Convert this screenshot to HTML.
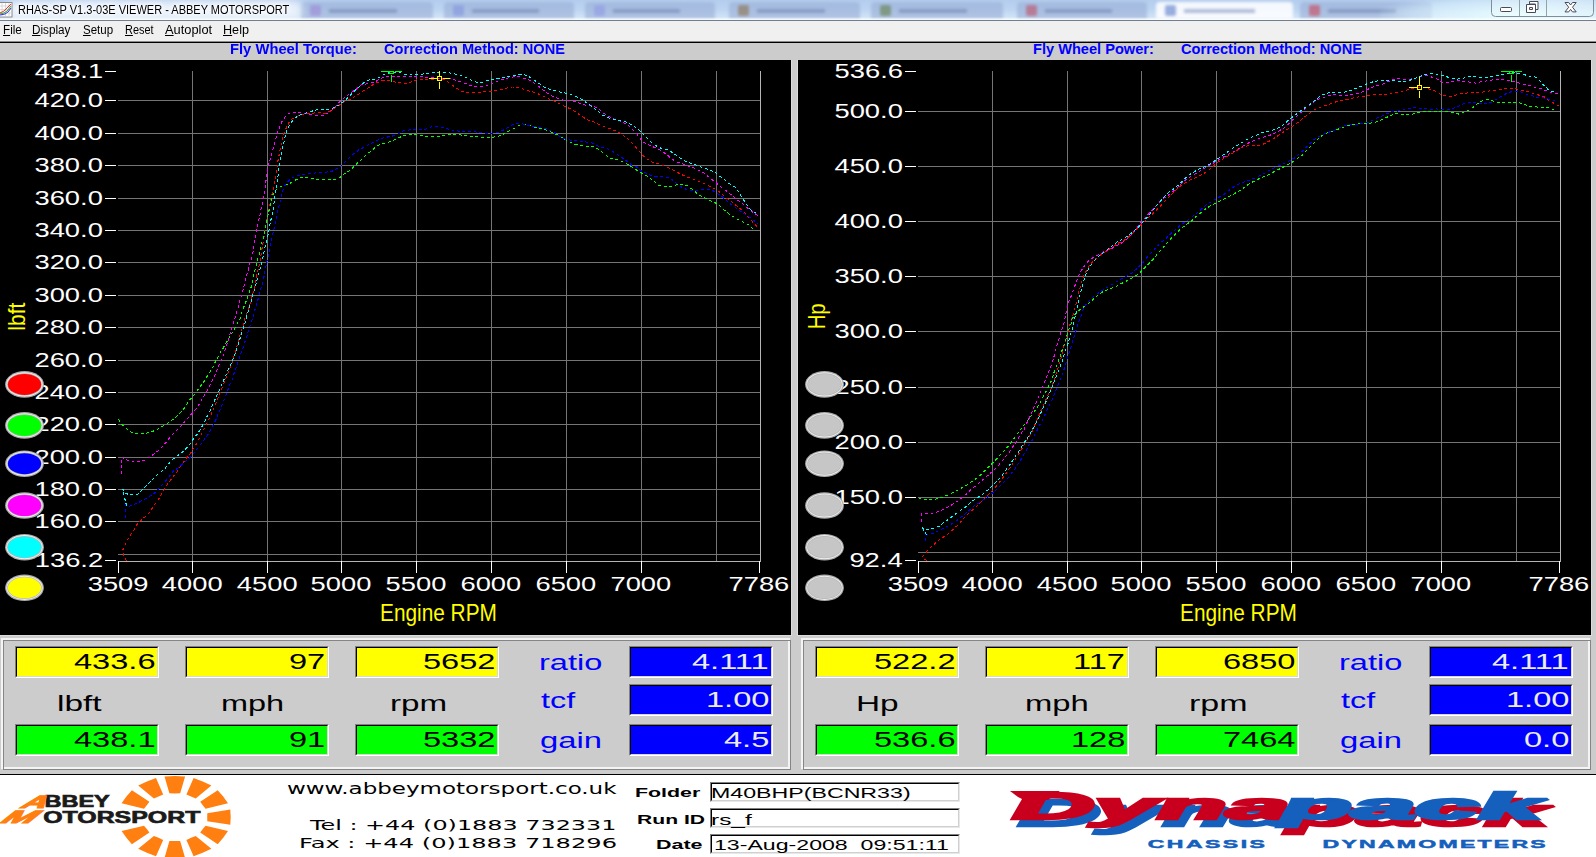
<!DOCTYPE html>
<html lang="en"><head><meta charset="utf-8"><title>RHAS-SP V1.3-03E VIEWER - ABBEY MOTORSPORT</title>
<style>

html,body{margin:0;padding:0;background:#ccc;}
body{width:1596px;height:857px;overflow:hidden;position:relative;font-family:'Liberation Sans',sans-serif;}
.abs,.t{position:absolute;}
.t{white-space:pre;line-height:1;transform-origin:0 0;}
#titlebar{left:0;top:0;width:1596px;height:21px;overflow:hidden;background:linear-gradient(#b4cdee 0,#bdd5f2 45%,#cfe1f6 80%,#e6f0fb 100%);}
#menubar{left:0;top:21px;width:1596px;height:20px;background:#f0f0f0;}
#menubar u{text-decoration:underline;text-underline-offset:1px;}
#sep{left:0;top:41px;width:1596px;height:2px;background:#000;border-top:1px solid #8a8a8a;box-sizing:border-box;}
#hdr{left:0;top:43px;width:1596px;height:17px;background:#ccc;}
.chart{top:60px;height:575px;background:#000;overflow:hidden;border-bottom:1px solid #dcdcdc;}
#chartL{left:0;width:791px;border-right:1px solid #dcdcdc;}
#chartR{left:797px;width:793px;border-left:1px solid #dcdcdc;border-right:1px solid #dcdcdc;}
.panel{top:635px;height:139px;background:#ccc;}
#panelL{left:0;width:791px;}
#panelR{left:800px;width:791px;}
.frame{position:absolute;box-sizing:border-box;}
.fw{left:1px;top:3px;width:789px;height:131px;border:2px solid #f4f4f4;}
.fd{left:3px;top:5px;width:788px;height:130px;border:1px solid #858585;}
.box{position:absolute;box-sizing:border-box;width:144px;height:32px;border:1px solid;border-color:#808080 #fff #fff #808080;overflow:hidden;}
.box>i{position:absolute;left:0;top:0;right:0;bottom:0;border:1px solid;border-color:#000 #d8d8d8 #d8d8d8 #000;}
.y{background:#ff0;}.g{background:#0f0;}.b{background:#00f;}
#footline{left:0;top:774px;width:1596px;height:1px;background:#000;}
#footer{left:0;top:775px;width:1596px;height:82px;background:#fff;overflow:hidden;}
.fld{position:absolute;box-sizing:border-box;left:710px;width:250px;height:20px;background:#fff;border:1px solid;border-color:#808080 #e8e8e8 #e8e8e8 #808080;}
.fld>i{position:absolute;left:0;top:0;right:0;bottom:0;border:1px solid;border-color:#000 #d0d0d0 #d0d0d0 #000;}
svg{position:absolute;left:0;top:0;overflow:visible;}

</style></head><body>
<div id="titlebar" class="abs">
<div id="glass" class="abs" style="left:0;top:0;width:1596px;height:21px;filter:blur(1.6px)"><div class="abs" style="left:301px;top:2px;width:132px;height:17px;background:rgba(150,172,212,.55);border-radius:4px 4px 0 0"></div><div class="abs" style="left:310px;top:5px;width:11px;height:11px;background:#9d83d6;opacity:.55;border-radius:2px"></div><div class="abs" style="left:329px;top:9px;width:68px;height:4px;background:rgba(95,115,165,.45)"></div><div class="abs" style="left:444px;top:2px;width:130px;height:17px;background:rgba(150,172,212,.55);border-radius:4px 4px 0 0"></div><div class="abs" style="left:453px;top:5px;width:11px;height:11px;background:#7f8fe0;opacity:.55;border-radius:2px"></div><div class="abs" style="left:472px;top:9px;width:67px;height:4px;background:rgba(95,115,165,.45)"></div><div class="abs" style="left:585px;top:2px;width:130px;height:17px;background:rgba(150,172,212,.55);border-radius:4px 4px 0 0"></div><div class="abs" style="left:594px;top:5px;width:11px;height:11px;background:#8c95e6;opacity:.55;border-radius:2px"></div><div class="abs" style="left:613px;top:9px;width:67px;height:4px;background:rgba(95,115,165,.45)"></div><div class="abs" style="left:729px;top:2px;width:131px;height:17px;background:rgba(150,172,212,.55);border-radius:4px 4px 0 0"></div><div class="abs" style="left:738px;top:5px;width:11px;height:11px;background:#8a6a3c;opacity:.55;border-radius:2px"></div><div class="abs" style="left:757px;top:9px;width:68px;height:4px;background:rgba(95,115,165,.45)"></div><div class="abs" style="left:871px;top:2px;width:132px;height:17px;background:rgba(150,172,212,.55);border-radius:4px 4px 0 0"></div><div class="abs" style="left:880px;top:5px;width:11px;height:11px;background:#5d7a3a;opacity:.55;border-radius:2px"></div><div class="abs" style="left:899px;top:9px;width:68px;height:4px;background:rgba(95,115,165,.45)"></div><div class="abs" style="left:1017px;top:2px;width:130px;height:17px;background:rgba(150,172,212,.55);border-radius:4px 4px 0 0"></div><div class="abs" style="left:1026px;top:5px;width:11px;height:11px;background:#c0455a;opacity:.55;border-radius:2px"></div><div class="abs" style="left:1045px;top:9px;width:67px;height:4px;background:rgba(95,115,165,.45)"></div><div class="abs" style="left:1156px;top:2px;width:137px;height:17px;background:rgba(255,255,255,.85);border-radius:4px 4px 0 0"></div><div class="abs" style="left:1165px;top:5px;width:11px;height:11px;background:#4a6fc4;opacity:.55;border-radius:2px"></div><div class="abs" style="left:1184px;top:9px;width:71px;height:4px;background:rgba(120,140,190,.55)"></div><div class="abs" style="left:1300px;top:2px;width:132px;height:17px;background:rgba(150,172,212,.55);border-radius:4px 4px 0 0"></div><div class="abs" style="left:1309px;top:5px;width:11px;height:11px;background:#d23b4b;opacity:.55;border-radius:2px"></div><div class="abs" style="left:1328px;top:9px;width:68px;height:4px;background:rgba(95,115,165,.45)"></div><div class="abs" style="left:6px;top:1px;width:296px;height:17px;border-radius:8px;background:rgba(255,255,255,.72);filter:blur(4px)"></div><div class="abs" style="left:1380px;top:-6px;width:240px;height:30px;background:radial-gradient(ellipse at 60% 70%,rgba(235,255,255,.95),rgba(220,245,255,.5) 55%,rgba(255,255,255,0) 75%)"></div></div><div class="abs" style="left:0;top:17px;width:1596px;height:3px;background:linear-gradient(rgba(255,255,255,0),rgba(255,255,255,.9))"></div><div class="abs" style="left:0;top:20px;width:1596px;height:1px;background:#6f7f8f"></div><svg width="14" height="20" viewBox="0 0 14 20"><rect x="-2" y="2.5" width="14" height="14.5" fill="#fff" stroke="#8a8a8a" stroke-width="1"/><path d="M2 3v14M5.5 3v14M9 3v14M-2 6h14M-2 9.5h14M-2 13h14" stroke="#cfcfcf" stroke-width=".8" fill="none"/><path d="M0 13 4 11 7 8 11 4" stroke="#e33" fill="none" stroke-width="1"/><path d="M0 14 4 13 7 11 11 6" stroke="#3a3" fill="none" stroke-width="1"/><path d="M0 15 5 14 8 12 11 8" stroke="#33e" fill="none" stroke-width="1"/></svg><span class="t" style="left:17.70px;top:2.60px;font:12px 'Liberation Sans',sans-serif;color:#000;transform:scaleX(0.9171);text-shadow:0 0 4px #fff,0 0 6px #fff,0 0 8px #fff;">RHAS-SP V1.3-03E VIEWER - ABBEY MOTORSPORT</span><svg id="winctl" style="left:1488px" width="108" height="20" viewBox="1488 0 108 20"><path d="M1491.5 -1V12.5Q1491.5 16.5 1495.5 16.5H1589.5Q1593.5 16.5 1593.5 12.5V-1" fill="rgba(255,255,255,.18)" stroke="#7f8f99" stroke-width="1"/><path d="M1519.5 0V16M1546.5 0V16" stroke="#8fa3a8" stroke-width="1"/><rect x="1500.5" y="7.5" width="11" height="4" rx="1" fill="#fff" stroke="#4a4a55" stroke-width="1"/><path d="M1529.5 1.5h8.5v8h-2.5v-5.500h-6z" fill="#fff" stroke="#4a4a55" stroke-width="1" stroke-linejoin="round"/><path fill-rule="evenodd" d="M1526.500 4.500h9v8h-9zM1529.500 7.500h3v2h-3z" fill="#fff" stroke="#4a4a55" stroke-width="1" stroke-linejoin="round"/><path d="M1565 2.500h3.700l1.900 2.500 1.900-2.500h3.700l-3.700 4.700 3.700 4.700h-3.700l-1.900-2.500-1.900 2.500h-3.700l3.700-4.700z" fill="#fff" stroke="#4a4a55" stroke-width="1" stroke-linejoin="round"/></svg>
</div>
<div id="menubar" class="abs">
<span class="t" style="left:2.54px;top:1.60px;font:12px 'Liberation Sans',sans-serif;color:#000;transform:scaleX(0.9708);"><u>F</u>ile</span>
<span class="t" style="left:32.34px;top:1.60px;font:12px 'Liberation Sans',sans-serif;color:#000;transform:scaleX(0.9755);"><u>D</u>isplay</span>
<span class="t" style="left:82.77px;top:1.60px;font:12px 'Liberation Sans',sans-serif;color:#000;transform:scaleX(0.9604);"><u>S</u>etup</span>
<span class="t" style="left:124.61px;top:1.60px;font:12px 'Liberation Sans',sans-serif;color:#000;transform:scaleX(0.9083);"><u>R</u>eset</span>
<span class="t" style="left:164.97px;top:1.60px;font:12px 'Liberation Sans',sans-serif;color:#000;transform:scaleX(1.0698);"><u>A</u>utoplot</span>
<span class="t" style="left:223.16px;top:1.60px;font:12px 'Liberation Sans',sans-serif;color:#000;transform:scaleX(1.0519);"><u>H</u>elp</span>
</div>
<div id="sep" class="abs"></div>
<div id="hdr" class="abs">
<span class="t" style="left:230.01px;top:-2.30px;font:normal bold 14.2px 'Liberation Sans',sans-serif;color:#00f;transform:scaleX(1.0409);">Fly Wheel Torque:</span>
<span class="t" style="left:384.20px;top:-2.30px;font:normal bold 14.2px 'Liberation Sans',sans-serif;color:#00f;transform:scaleX(1.0298);">Correction Method: NONE</span>
<span class="t" style="left:1033.02px;top:-2.30px;font:normal bold 14.2px 'Liberation Sans',sans-serif;color:#00f;transform:scaleX(1.0291);">Fly Wheel Power:</span>
<span class="t" style="left:1181.40px;top:-2.30px;font:normal bold 14.2px 'Liberation Sans',sans-serif;color:#00f;transform:scaleX(1.0298);">Correction Method: NONE</span>
</div>
<div id="chartL" class="abs chart"><svg width="791" height="575" viewBox="0 60 791 575" font-family="'Liberation Sans',sans-serif">
<path d="M118 100.5H761M118 133.5H761M118 165.5H761M118 198.5H761M118 230.5H761M118 262.5H761M118 295.5H761M118 327.5H761M118 360.5H761M118 392.5H761M118 424.5H761M118 457.5H761M118 489.5H761M118 521.5H761M118 554.5H761M192.5 71V561M267.5 71V561M341.5 71V561M416.5 71V561M491.5 71V561M566.5 71V561M641.5 71V561M716.5 71V561" stroke="#757575" stroke-width="1" fill="none" shape-rendering="crispEdges"/>
<path d="M118 561.5H761M760.5 71V561" stroke="#b4b4b4" stroke-width="1" fill="none" shape-rendering="crispEdges"/>
<path d="M105 71.5H116M105 100.5H116M105 133.5H116M105 165.5H116M105 198.5H116M105 230.5H116M105 262.5H116M105 295.5H116M105 327.5H116M105 360.5H116M105 392.5H116M105 424.5H116M105 457.5H116M105 489.5H116M105 521.5H116M105 560.5H116M118.5 561V573M192.5 561V573M267.5 561V573M341.5 561V573M416.5 561V573M491.5 561V573M566.5 561V573M641.5 561V573M759.5 561V573" stroke="#fff" stroke-width="1" fill="none" shape-rendering="crispEdges"/>
<g>
<text transform="translate(34.73,77.90) scale(1.4166,1)" font-size="19.3" fill="#fff">438.1</text>
<text transform="translate(34.46,106.90) scale(1.4166,1)" font-size="19.3" fill="#fff">420.0</text>
<text transform="translate(34.46,139.90) scale(1.4166,1)" font-size="19.3" fill="#fff">400.0</text>
<text transform="translate(34.46,171.90) scale(1.4166,1)" font-size="19.3" fill="#fff">380.0</text>
<text transform="translate(34.46,204.90) scale(1.4166,1)" font-size="19.3" fill="#fff">360.0</text>
<text transform="translate(34.46,236.90) scale(1.4166,1)" font-size="19.3" fill="#fff">340.0</text>
<text transform="translate(34.46,268.90) scale(1.4166,1)" font-size="19.3" fill="#fff">320.0</text>
<text transform="translate(34.46,301.90) scale(1.4166,1)" font-size="19.3" fill="#fff">300.0</text>
<text transform="translate(34.46,333.90) scale(1.4166,1)" font-size="19.3" fill="#fff">280.0</text>
<text transform="translate(34.46,366.90) scale(1.4166,1)" font-size="19.3" fill="#fff">260.0</text>
<text transform="translate(34.46,398.90) scale(1.4166,1)" font-size="19.3" fill="#fff">240.0</text>
<text transform="translate(34.46,430.90) scale(1.4166,1)" font-size="19.3" fill="#fff">220.0</text>
<text transform="translate(34.46,463.90) scale(1.4166,1)" font-size="19.3" fill="#fff">200.0</text>
<text transform="translate(34.46,495.90) scale(1.4166,1)" font-size="19.3" fill="#fff">180.0</text>
<text transform="translate(34.46,527.90) scale(1.4166,1)" font-size="19.3" fill="#fff">160.0</text>
<text transform="translate(34.76,566.90) scale(1.4166,1)" font-size="19.3" fill="#fff">136.2</text>
<text transform="translate(87.72,590.80) scale(1.4166,1)" font-size="19.3" fill="#fff">3509</text>
<text transform="translate(161.82,590.80) scale(1.4166,1)" font-size="19.3" fill="#fff">4000</text>
<text transform="translate(236.82,590.80) scale(1.4166,1)" font-size="19.3" fill="#fff">4500</text>
<text transform="translate(310.58,590.80) scale(1.4166,1)" font-size="19.3" fill="#fff">5000</text>
<text transform="translate(385.58,590.80) scale(1.4166,1)" font-size="19.3" fill="#fff">5500</text>
<text transform="translate(460.43,590.80) scale(1.4166,1)" font-size="19.3" fill="#fff">6000</text>
<text transform="translate(535.43,590.80) scale(1.4166,1)" font-size="19.3" fill="#fff">6500</text>
<text transform="translate(610.43,590.80) scale(1.4166,1)" font-size="19.3" fill="#fff">7000</text>
<text transform="translate(728.50,590.80) scale(1.4166,1)" font-size="19.3" fill="#fff">7786</text>
</g>
<text transform="translate(380.09,621.00) scale(0.8563,1)" font-size="24.3" fill="#ff0">Engine RPM</text>
<text transform="translate(25.00,330.71) rotate(-90) scale(0.8912,1)" font-size="23.6" fill="#ff0">lbft</text>
<g fill="none" stroke-width="1" stroke-dasharray="3 2.6" shape-rendering="crispEdges">
<path d="M126.6,560.7 123.6,555.7 122.5,550.7 124.6,546.2 126.6,541.7 128.6,538.2 131.6,533.1 134.1,529.6 136.6,525.1 139.6,521.6 142.6,518.9 146.6,515.6 149.1,512.9 151.2,509.6 153.7,505.8 156.7,502.1 159.2,498.3 161.2,494.3 163.7,490.2 165.7,486.7 168.2,483.2 171.2,479.2 174.7,474.7 178.3,470.2 181.3,465.2 184.3,461.1 187.3,457.1 190.3,453.6 192.8,449.6 195.3,445.6 198.3,441.1 199.8,437.0 201.8,433.5 203.9,429.3 206.4,424.3 207.9,421.3 210.4,416.2 212.4,411.2 214.9,405.7 216.9,400.2 218.9,396.0 220.9,391.2 222.9,386.1 224.9,381.1 226.9,375.6 228.9,371.1 230.5,366.6 232.5,362.0 234.0,356.5 235.4,351.3 236.9,346.8 237.9,342.8 239.4,338.3 240.4,333.2 242.4,328.2 243.9,322.2 245.4,317.0 247.4,312.2 248.4,308.1 250.5,302.6 251.7,297.6 253.0,292.6 254.5,287.6 255.5,282.0 256.3,276.5 257.9,270.3 259.4,264.3 260.4,258.3 261.4,252.2 262.4,246.2 263.4,240.2 264.4,234.2 265.4,228.1 266.4,223.1 267.2,218.1 268.4,213.1 269.4,207.1 271.7,195.5 273.4,188.8 275.4,178.8 276.7,168.8 278.0,160.5 279.7,152.1 280.9,145.4 282.5,138.8 284.2,132.1 286.7,127.1 289.2,122.1 292.5,118.7 297.5,116.2 302.6,114.6 308.4,113.7 315.1,112.9 318.4,112.4 323.4,113.4 326.8,112.9 331.8,110.4 336.8,106.7 341.8,103.4 346.8,100.7 351.8,98.4 356.8,95.4 361.8,92.0 366.8,88.7 371.8,85.4 376.8,82.9 381.8,80.9 388.5,80.4 395.2,82.0 401.8,83.2 407.7,83.2 412.7,81.2 416.9,79.5 425.2,79.2 431.9,79.2 439.4,78.7 445.2,80.0 450.2,83.7 456.1,87.9 461.9,91.7 468.6,92.5 476.9,92.5 483.6,91.7 492.0,91.2 498.6,90.4 505.0,88.4 512.5,87.0 516.7,87.0 523.4,89.0 530.0,91.2 536.7,93.2 543.4,96.2 550.1,99.5 556.7,102.1 562.6,105.4 566.8,107.1 571.8,109.6 576.8,112.9 581.8,116.2 586.8,119.6 593.5,121.7 600.1,125.1 606.8,127.4 613.5,130.1 619.3,132.4 623.5,135.4 628.5,139.6 633.5,144.6 638.5,150.4 641.8,154.6 646.9,158.8 651.9,162.1 658.5,163.8 665.2,166.3 671.9,169.6 678.6,173.0 685.2,176.3 691.9,178.5 698.6,181.3 704.3,183.6 708.8,185.9 713.3,188.1 715.8,189.6 719.3,191.9 722.8,194.9 725.8,197.6 729.9,200.1 732.9,202.9 736.4,205.6 739.9,208.6 743.9,211.7 746.4,214.7 748.9,218.0 751.9,221.0 755.0,224.7 758.5,228.0" stroke="#f00"/>
<path d="M118.5,419.3 119.5,421.3 121.8,424.3 125.1,427.3 128.1,430.3 132.1,432.8 137.1,433.8 143.1,433.8 148.1,432.8 153.2,431.1 157.2,429.3 161.7,426.8 165.7,424.8 169.2,422.1 173.2,419.3 177.3,415.7 180.8,412.0 184.3,408.0 187.3,403.7 190.3,399.2 193.3,396.2 195.8,393.0 198.3,389.1 201.3,385.1 203.9,381.6 206.9,376.6 208.4,374.6 210.9,370.6 213.4,366.1 215.9,360.5 218.4,356.5 220.3,352.3 222.8,348.8 224.9,344.8 227.4,340.8 229.9,336.2 232.9,332.0 234.9,328.0 237.4,323.2 239.9,319.2 241.4,314.2 243.4,308.1 245.4,303.1 246.9,299.1 248.9,293.6 251.0,287.6 252.5,281.5 253.5,276.0 254.9,270.3 256.4,264.8 257.6,259.8 258.9,255.2 260.4,249.7 261.4,244.2 262.9,239.2 264.2,233.7 265.6,227.1 266.9,220.1 268.4,213.6 269.4,208.6 271.0,203.6 271.7,197.2 274.2,192.2 276.7,189.2 280.9,186.3 285.0,185.5 289.2,183.8 294.2,180.8 299.2,178.0 304.2,177.1 310.1,178.3 316.7,179.5 326.8,179.5 335.1,179.3 339.3,178.0 343.4,174.6 348.4,171.3 353.5,167.1 357.6,163.0 362.6,158.5 367.6,153.8 372.6,149.6 376.8,146.3 381.8,143.8 386.8,142.4 391.8,141.3 396.0,138.8 400.2,137.1 405.2,135.4 411.9,134.6 418.5,135.1 426.9,136.3 435.2,136.4 441.9,135.9 446.9,134.6 453.6,134.3 460.3,134.9 468.6,136.3 476.9,136.6 485.3,137.4 493.6,137.1 502.0,135.4 505.0,132.9 510.0,130.4 515.0,127.9 520.0,125.1 525.0,124.6 530.0,125.7 535.9,127.4 541.7,128.8 548.4,130.8 553.4,132.9 558.4,135.4 564.2,138.8 570.1,142.1 575.1,144.6 581.8,145.4 588.4,146.3 595.1,147.1 600.1,150.4 605.1,154.6 610.1,158.0 616.8,159.6 623.5,162.1 628.5,164.6 633.5,168.0 638.5,171.3 643.5,174.1 648.5,177.1 653.5,180.8 658.5,185.2 665.2,186.8 671.9,186.3 676.9,184.7 683.6,184.2 688.6,186.3 693.6,190.5 698.6,194.7 703.3,197.3 707.3,199.4 711.8,201.3 715.3,202.9 719.3,205.6 722.8,208.9 726.8,212.0 730.4,215.0 734.4,217.4 738.4,219.7 742.4,221.7 745.4,223.0 748.9,225.0 751.9,228.0 756.0,231.0" stroke="#0f0"/>
<path d="M125.6,517.6 125.6,511.1 125.6,504.5 129.1,506.5 133.6,504.8 138.1,502.8 143.1,499.8 147.1,498.1 151.2,495.3 154.2,493.3 158.2,489.2 161.2,485.7 164.2,482.7 166.7,479.7 169.7,476.0 173.2,471.2 176.8,468.7 180.3,466.0 184.3,462.6 188.3,459.1 191.8,455.6 193.8,453.1 196.8,449.6 199.3,446.3 202.3,442.3 205.4,438.0 208.4,434.0 210.4,430.1 213.4,424.3 215.9,419.8 217.4,415.7 219.4,411.2 221.4,406.7 223.4,401.7 225.4,396.4 227.4,391.2 229.4,385.6 231.5,381.1 233.3,376.3 234.5,371.6 236.5,366.6 238.5,360.5 240.5,354.5 242.4,349.8 243.4,346.8 244.9,341.8 246.4,337.8 247.9,332.7 249.4,327.4 251.5,322.2 253.0,317.0 254.5,311.2 256.0,306.1 257.5,301.6 259.0,295.6 260.5,290.1 262.0,284.6 263.5,279.5 264.5,273.5 265.9,266.8 266.9,261.3 268.4,255.2 269.4,249.7 271.0,242.7 272.0,238.2 273.0,233.2 274.3,227.6 275.5,221.6 276.5,216.6 277.5,211.1 279.0,205.6 280.0,202.2 281.7,195.5 283.4,188.8 285.0,185.5 287.5,182.2 290.9,178.8 295.0,176.3 301.7,174.6 308.4,173.5 315.1,173.0 320.1,172.1 326.8,172.1 331.8,171.3 336.8,168.8 341.8,165.5 345.9,161.3 350.9,156.3 356.0,152.1 360.1,148.8 365.1,147.1 370.1,143.8 375.1,141.3 380.2,138.8 385.2,137.4 391.8,136.3 398.5,133.8 403.5,130.8 410.2,129.8 418.5,129.6 425.2,129.3 430.2,127.1 435.2,126.2 441.9,127.1 448.6,129.1 453.6,130.4 460.3,131.3 468.6,131.3 476.9,132.1 483.6,132.9 490.3,133.4 495.3,133.4 500.3,131.3 503.3,130.1 508.3,127.1 513.4,124.1 518.4,123.4 523.4,124.1 529.2,125.4 535.0,126.7 541.7,127.4 547.6,129.3 553.4,132.1 559.2,136.3 565.1,139.1 571.8,140.4 578.4,140.9 585.1,141.8 591.8,142.9 596.8,145.4 601.8,147.4 608.5,149.1 615.1,152.9 621.8,157.5 627.7,161.8 631.8,165.1 636.8,167.1 641.8,171.3 646.9,173.5 651.9,175.8 658.5,176.8 666.9,177.1 671.9,179.6 676.9,183.8 681.9,187.2 686.9,189.7 691.9,190.5 702.3,189.6 708.3,189.4 713.3,190.9 717.8,193.9 720.8,195.3 723.8,198.3 727.9,201.9 731.4,204.6 734.9,207.1 738.4,210.2 742.4,212.2 746.4,215.0 750.4,218.0 754.5,221.0 757.5,224.2" stroke="#00f"/>
<path d="M121.5,473.7 121.5,465.2 121.5,456.9 126.1,459.6 130.1,461.3 135.1,462.3 140.1,461.6 144.6,460.1 149.6,457.1 153.7,454.1 157.7,451.1 160.7,448.1 164.2,444.6 167.2,441.1 170.2,437.0 173.2,433.8 176.8,430.3 180.3,426.5 183.3,423.1 186.3,419.8 189.3,416.8 192.3,413.0 195.3,410.0 197.8,406.7 200.3,402.2 202.8,398.0 205.4,393.7 207.9,389.1 210.4,384.6 212.4,380.1 214.4,376.3 216.4,371.1 218.4,367.1 219.9,363.0 221.9,358.0 224.4,353.5 225.4,348.3 226.9,344.3 228.9,338.3 230.4,332.2 231.9,328.0 233.4,323.2 234.9,318.2 236.4,313.2 237.9,308.1 239.4,302.1 240.9,297.1 242.4,292.1 243.9,286.6 245.4,281.5 246.4,276.5 247.9,271.3 249.4,265.3 250.9,260.3 252.4,255.7 253.4,249.7 254.4,243.7 255.4,237.2 256.4,231.7 257.6,226.6 258.6,221.1 259.9,215.6 260.9,209.6 262.4,203.6 264.2,195.5 265.8,182.2 267.5,168.8 269.2,162.1 270.8,158.0 273.4,147.1 275.9,138.8 277.5,132.9 279.2,127.9 281.7,122.1 285.0,117.1 288.4,113.7 292.5,112.4 300.1,112.6 306.7,113.4 313.4,115.1 324.2,115.1 326.8,113.7 331.8,110.4 335.9,106.2 340.1,101.2 345.1,97.0 350.9,92.9 356.8,88.7 361.8,84.5 368.5,83.7 375.1,82.0 380.2,78.7 385.2,76.7 391.8,76.0 401.8,76.7 410.2,76.7 420.2,76.7 428.5,77.4 435.2,78.2 443.6,78.2 450.2,78.7 456.9,80.4 463.6,82.9 470.3,85.4 476.9,86.7 483.6,86.7 488.6,85.4 493.6,82.9 500.3,80.0 506.7,78.2 515.0,76.7 520.0,77.0 525.0,78.7 530.9,80.7 535.9,84.5 541.7,88.7 546.7,92.9 553.4,96.7 558.4,98.4 563.4,100.0 570.1,100.7 576.8,102.1 581.8,104.6 587.6,105.4 593.5,106.2 598.5,108.7 603.5,112.9 608.5,116.2 613.5,118.7 620.2,121.2 626.8,124.1 631.8,128.8 636.8,133.8 641.0,139.6 645.2,143.4 651.9,146.3 658.5,149.1 665.2,153.4 670.2,157.5 675.2,161.3 681.9,163.5 688.6,166.3 695.2,168.5 703.8,173.0 707.3,175.8 711.3,179.0 715.8,182.5 719.8,185.9 723.3,188.9 726.8,191.1 730.4,194.1 733.4,196.6 736.9,199.9 740.9,202.1 743.9,205.1 747.4,207.9 750.4,210.7 754.5,213.4 758.5,216.2" stroke="#f0f"/>
<path d="M126.6,506.0 125.1,499.8 123.9,495.3 123.0,491.2 122.8,489.0 124.1,492.5 128.6,494.5 132.6,494.5 136.1,494.8 139.1,493.3 142.1,490.0 145.1,487.0 148.6,483.7 152.2,480.0 155.2,477.0 158.2,474.0 161.7,471.2 165.7,467.7 169.2,463.1 172.2,459.9 175.2,457.4 178.8,454.9 182.3,452.1 185.3,449.1 188.3,446.1 191.8,441.9 193.8,438.0 196.8,434.8 199.3,431.1 201.8,426.8 204.4,422.1 206.9,416.8 208.9,413.2 210.9,408.7 212.9,404.2 214.9,399.7 216.9,395.0 218.9,391.0 220.9,386.3 222.9,381.9 224.9,377.6 226.9,373.1 228.9,368.1 231.0,364.1 232.7,359.5 235.0,354.0 236.4,349.3 238.4,343.8 240.4,337.3 242.4,331.2 243.9,326.2 245.4,321.7 246.9,315.7 248.4,311.2 249.9,305.6 251.5,300.1 252.5,295.6 254.0,291.1 255.5,286.6 256.5,281.5 258.0,276.5 259.4,271.3 260.9,265.8 262.2,260.8 263.4,255.2 264.4,249.7 265.9,243.7 267.4,237.2 268.4,233.2 269.4,227.6 270.5,221.6 272.0,215.6 273.3,209.1 274.0,203.0 274.2,198.8 275.9,190.5 277.5,182.2 278.7,168.8 280.0,162.1 281.4,155.5 282.5,148.8 283.9,142.1 285.0,137.1 286.4,131.3 288.4,127.1 290.9,122.9 293.4,119.6 297.5,116.2 302.6,114.1 308.4,112.4 313.4,110.7 317.6,109.6 328.4,109.6 333.4,107.9 338.4,105.4 342.6,102.1 346.8,98.7 350.9,94.5 355.1,90.4 360.1,86.2 364.3,82.4 369.3,80.0 375.1,79.0 380.2,77.0 385.2,73.7 391.8,72.3 400.2,72.7 405.2,74.5 411.0,75.0 420.2,74.5 426.9,73.3 435.2,72.3 445.2,72.3 451.9,73.3 460.3,75.0 466.9,77.9 471.9,80.7 476.9,82.4 482.8,82.4 487.0,80.7 492.8,79.2 498.6,78.4 503.3,77.4 510.0,76.7 516.7,75.0 522.5,74.0 528.4,76.2 533.4,79.5 539.2,83.7 544.2,87.0 550.1,89.5 558.4,91.7 566.8,93.4 573.4,95.4 580.1,98.4 585.1,101.7 590.9,105.7 596.8,110.4 601.8,114.6 608.5,117.9 615.1,119.6 621.8,120.9 627.7,122.4 633.5,126.2 638.5,129.6 641.8,132.9 646.0,136.8 651.0,142.1 656.9,146.3 662.7,149.1 668.5,150.1 673.6,153.4 679.4,157.5 685.2,161.3 691.9,163.5 714.3,171.8 719.3,176.0 723.8,179.0 727.4,182.0 730.9,184.9 734.9,187.1 737.9,191.1 740.9,195.6 743.4,199.6 745.9,202.9 748.4,207.1 751.9,210.7 756.0,213.2" stroke="#0ff"/>
</g>
<g stroke="#ff0" stroke-width="1" fill="none" shape-rendering="crispEdges"><path d="M429.0 78.5H436.5M442.5 78.5H450.0M439.5 70.5V75.5M439.5 81.5V89.0"/><rect x="437.5" y="76.5" width="4" height="4" rx="1.2"/></g>
<g stroke="#0f0" stroke-width="1" fill="none" shape-rendering="crispEdges"><path d="M381.0 71.5H388.5M394.5 71.5H402.0M391.5 70.5V70.5M391.5 74.5V82.0"/><rect x="389.5" y="71.5" width="4" height="2" rx="0"/></g>
<ellipse cx="24.5" cy="384.4" rx="19.4" ry="13.3" fill="#a9a9a9"/><ellipse cx="24.5" cy="384.4" rx="18.2" ry="12.1" fill="#efefef"/><ellipse cx="24.5" cy="384.4" rx="17.3" ry="11.1" fill="#b5b5b5"/><ellipse cx="24.5" cy="384.4" rx="16.6" ry="10.5" fill="#f00"/>
<ellipse cx="24.5" cy="425.4" rx="19.4" ry="13.3" fill="#a9a9a9"/><ellipse cx="24.5" cy="425.4" rx="18.2" ry="12.1" fill="#efefef"/><ellipse cx="24.5" cy="425.4" rx="17.3" ry="11.1" fill="#b5b5b5"/><ellipse cx="24.5" cy="425.4" rx="16.6" ry="10.5" fill="#0f0"/>
<ellipse cx="24.5" cy="463.7" rx="19.4" ry="13.3" fill="#a9a9a9"/><ellipse cx="24.5" cy="463.7" rx="18.2" ry="12.1" fill="#efefef"/><ellipse cx="24.5" cy="463.7" rx="17.3" ry="11.1" fill="#b5b5b5"/><ellipse cx="24.5" cy="463.7" rx="16.6" ry="10.5" fill="#00f"/>
<ellipse cx="24.5" cy="505.5" rx="19.4" ry="13.3" fill="#a9a9a9"/><ellipse cx="24.5" cy="505.5" rx="18.2" ry="12.1" fill="#efefef"/><ellipse cx="24.5" cy="505.5" rx="17.3" ry="11.1" fill="#b5b5b5"/><ellipse cx="24.5" cy="505.5" rx="16.6" ry="10.5" fill="#f0f"/>
<ellipse cx="24.5" cy="547.2" rx="19.4" ry="13.3" fill="#a9a9a9"/><ellipse cx="24.5" cy="547.2" rx="18.2" ry="12.1" fill="#efefef"/><ellipse cx="24.5" cy="547.2" rx="17.3" ry="11.1" fill="#b5b5b5"/><ellipse cx="24.5" cy="547.2" rx="16.6" ry="10.5" fill="#0ff"/>
<ellipse cx="24.5" cy="587.8" rx="19.4" ry="13.3" fill="#a9a9a9"/><ellipse cx="24.5" cy="587.8" rx="18.2" ry="12.1" fill="#efefef"/><ellipse cx="24.5" cy="587.8" rx="17.3" ry="11.1" fill="#b5b5b5"/><ellipse cx="24.5" cy="587.8" rx="16.6" ry="10.5" fill="#ff0"/>
</svg></div>
<div id="chartR" class="abs chart"><svg width="793" height="575" viewBox="-2 60 793 575" font-family="'Liberation Sans',sans-serif">
<path d="M118 111.5H761M118 166.5H761M118 221.5H761M118 276.5H761M118 331.5H761M118 387.5H761M118 442.5H761M118 497.5H761M118 552.5H761M192.5 71V561M267.5 71V561M341.5 71V561M416.5 71V561M491.5 71V561M566.5 71V561M641.5 71V561M716.5 71V561" stroke="#757575" stroke-width="1" fill="none" shape-rendering="crispEdges"/>
<path d="M118 561.5H761M760.5 71V561" stroke="#b4b4b4" stroke-width="1" fill="none" shape-rendering="crispEdges"/>
<path d="M105 71.5H116M105 111.5H116M105 166.5H116M105 221.5H116M105 276.5H116M105 331.5H116M105 387.5H116M105 442.5H116M105 497.5H116M105 560.5H116M118.5 561V573M192.5 561V573M267.5 561V573M341.5 561V573M416.5 561V573M491.5 561V573M566.5 561V573M641.5 561V573M759.5 561V573" stroke="#fff" stroke-width="1" fill="none" shape-rendering="crispEdges"/>
<g>
<text transform="translate(34.60,77.90) scale(1.4166,1)" font-size="19.3" fill="#fff">536.6</text>
<text transform="translate(34.46,117.90) scale(1.4166,1)" font-size="19.3" fill="#fff">500.0</text>
<text transform="translate(34.46,172.90) scale(1.4166,1)" font-size="19.3" fill="#fff">450.0</text>
<text transform="translate(34.46,227.90) scale(1.4166,1)" font-size="19.3" fill="#fff">400.0</text>
<text transform="translate(34.46,282.90) scale(1.4166,1)" font-size="19.3" fill="#fff">350.0</text>
<text transform="translate(34.46,337.90) scale(1.4166,1)" font-size="19.3" fill="#fff">300.0</text>
<text transform="translate(34.46,393.90) scale(1.4166,1)" font-size="19.3" fill="#fff">250.0</text>
<text transform="translate(34.46,448.90) scale(1.4166,1)" font-size="19.3" fill="#fff">200.0</text>
<text transform="translate(34.46,503.90) scale(1.4166,1)" font-size="19.3" fill="#fff">150.0</text>
<text transform="translate(49.39,566.90) scale(1.4166,1)" font-size="19.3" fill="#fff">92.4</text>
<text transform="translate(87.72,590.80) scale(1.4166,1)" font-size="19.3" fill="#fff">3509</text>
<text transform="translate(161.82,590.80) scale(1.4166,1)" font-size="19.3" fill="#fff">4000</text>
<text transform="translate(236.82,590.80) scale(1.4166,1)" font-size="19.3" fill="#fff">4500</text>
<text transform="translate(310.58,590.80) scale(1.4166,1)" font-size="19.3" fill="#fff">5000</text>
<text transform="translate(385.58,590.80) scale(1.4166,1)" font-size="19.3" fill="#fff">5500</text>
<text transform="translate(460.43,590.80) scale(1.4166,1)" font-size="19.3" fill="#fff">6000</text>
<text transform="translate(535.43,590.80) scale(1.4166,1)" font-size="19.3" fill="#fff">6500</text>
<text transform="translate(610.43,590.80) scale(1.4166,1)" font-size="19.3" fill="#fff">7000</text>
<text transform="translate(728.50,590.80) scale(1.4166,1)" font-size="19.3" fill="#fff">7786</text>
</g>
<text transform="translate(380.09,621.00) scale(0.8563,1)" font-size="24.3" fill="#ff0">Engine RPM</text>
<text transform="translate(25.00,329.37) rotate(-90) scale(0.8629,1)" font-size="23.6" fill="#ff0">Hp</text>
<g fill="none" stroke-width="1" stroke-dasharray="3 2.6" shape-rendering="crispEdges">
<path d="M126.6,560.4 123.6,558.7 122.5,556.6 124.6,554.1 126.6,551.6 128.6,549.6 131.6,546.6 134.1,544.4 136.6,541.8 139.6,539.4 142.6,537.5 146.6,535.0 149.1,533.1 151.2,531.1 153.7,528.7 156.7,526.1 159.2,523.7 161.2,521.2 163.7,518.6 165.7,516.4 168.2,514.0 171.2,511.2 174.7,508.0 178.3,504.8 181.3,501.4 184.3,498.6 187.3,495.7 190.3,493.0 192.8,490.2 195.3,487.4 198.3,484.2 199.8,481.7 201.8,479.2 203.9,476.4 206.4,473.0 207.9,470.9 210.4,467.4 212.4,464.1 214.9,460.4 216.9,456.7 218.9,453.8 220.9,450.5 222.9,447.1 224.9,443.7 226.9,440.0 228.9,436.8 230.5,433.8 232.5,430.6 234.0,427.0 235.4,423.5 236.9,420.5 237.9,417.9 239.4,414.8 240.4,411.6 242.4,408.0 243.9,404.0 245.4,400.5 247.4,396.9 248.4,394.3 250.5,390.3 251.7,387.0 253.0,383.5 254.5,380.0 255.5,376.5 256.3,372.9 257.9,368.7 259.4,364.5 260.4,360.6 261.4,356.7 262.4,352.7 263.4,348.8 264.4,344.8 265.4,340.9 266.4,337.5 267.2,334.2 268.4,330.6 269.4,326.6 271.7,318.7 273.4,314.0 275.4,307.0 276.7,300.4 278.0,294.8 279.7,289.0 280.9,284.4 282.5,279.5 284.2,274.6 286.7,270.2 289.2,265.7 292.5,261.8 297.5,257.4 302.6,253.5 308.4,249.7 315.1,245.3 318.4,243.1 323.4,240.8 326.8,238.6 331.8,234.1 336.8,228.9 341.8,223.8 346.8,219.1 351.8,214.7 356.8,209.7 361.8,204.6 366.8,199.3 371.8,194.1 376.8,189.4 381.8,185.0 388.5,180.7 395.2,177.8 401.8,174.6 407.7,171.1 412.7,166.6 416.9,162.9 425.2,157.7 431.9,153.6 439.4,148.7 445.2,146.1 450.2,145.8 456.1,145.4 461.9,144.8 468.6,141.5 476.9,136.5 483.6,131.9 492.0,126.6 498.6,122.0 505.0,116.6 512.5,111.1 516.7,108.6 523.4,106.2 530.0,104.0 536.7,101.6 543.4,100.1 550.1,98.9 556.7,97.1 562.6,96.5 566.8,95.5 571.8,94.7 576.8,94.6 581.8,94.6 586.8,94.6 593.5,92.6 600.1,91.7 606.8,90.0 613.5,88.6 619.3,87.4 623.5,87.7 628.5,88.7 633.5,90.4 638.5,92.9 641.8,94.9 646.9,96.0 651.9,96.4 658.5,94.3 665.2,93.1 671.9,92.7 678.6,92.3 685.2,91.9 691.9,90.5 698.6,89.8 704.3,89.0 708.8,88.9 713.3,88.7 715.8,88.9 719.3,89.3 722.8,90.5 725.8,91.6 729.9,92.0 732.9,93.3 736.4,94.2 739.9,95.5 743.9,96.5 746.4,98.3 748.9,100.3 751.9,101.9 755.0,104.2 758.5,105.8" stroke="#f00"/>
<path d="M118.5,497.7 119.5,498.3 121.8,498.9 125.1,499.3 128.1,499.8 132.1,499.8 137.1,498.7 143.1,496.9 148.1,494.9 153.2,492.6 157.2,490.5 161.7,487.9 165.7,485.7 169.2,483.3 173.2,480.6 177.3,477.6 180.8,474.6 184.3,471.4 187.3,468.3 190.3,464.9 193.3,462.4 195.8,459.9 198.3,457.0 201.3,453.9 203.9,451.2 206.9,447.5 208.4,445.9 210.9,442.9 213.4,439.6 215.9,435.7 218.4,432.6 220.3,429.7 222.8,426.8 224.9,423.9 227.4,420.7 229.9,417.3 232.9,413.8 234.9,410.8 237.4,407.1 239.9,403.9 241.4,400.5 243.4,396.3 245.4,392.7 246.9,389.8 248.9,385.8 251.0,381.5 252.5,377.5 253.5,373.9 254.9,370.0 256.4,366.2 257.6,362.7 258.9,359.6 260.4,355.7 261.4,352.0 262.9,348.4 264.2,344.6 265.6,340.2 266.9,335.5 268.4,330.9 269.4,327.5 271.0,323.8 271.7,319.7 274.2,315.5 276.7,312.5 280.9,308.7 285.0,306.0 289.2,302.9 294.2,298.5 299.2,294.2 304.2,291.0 310.1,288.7 316.7,286.0 326.8,280.8 335.1,276.4 339.3,273.3 343.4,269.0 348.4,264.2 353.5,258.8 357.6,253.9 362.6,248.2 367.6,242.4 372.6,236.9 376.8,232.4 381.8,227.9 386.8,224.2 391.8,220.7 396.0,216.6 400.2,213.2 405.2,209.2 411.9,204.9 418.5,201.6 426.9,197.7 435.2,193.2 441.9,189.2 446.9,185.4 453.6,181.4 460.3,178.2 468.6,174.6 476.9,170.2 485.3,166.2 493.6,161.3 502.0,155.4 505.0,151.7 510.0,146.9 515.0,142.1 520.0,137.0 525.0,133.8 530.0,131.9 535.9,130.0 541.7,127.8 548.4,125.7 553.4,124.7 558.4,124.0 564.2,123.5 570.1,123.1 575.1,122.5 581.8,119.5 588.4,116.6 595.1,113.6 600.1,113.8 605.1,114.7 610.1,115.0 616.8,112.8 623.5,111.5 628.5,111.1 633.5,111.4 638.5,111.8 643.5,111.7 648.5,111.8 653.5,112.6 658.5,114.0 665.2,112.1 671.9,108.2 676.9,104.1 683.6,100.2 688.6,99.7 693.6,101.1 698.6,102.5 703.3,102.7 707.3,102.7 711.8,102.3 715.3,102.1 719.3,102.7 722.8,104.2 726.8,105.2 730.4,106.4 734.4,106.8 738.4,107.1 742.4,107.2 745.4,107.0 748.9,107.3 751.9,108.9 756.0,110.0" stroke="#0f0"/>
<path d="M125.6,540.7 125.6,537.7 125.6,534.7 129.1,534.8 133.6,533.0 138.1,530.9 143.1,528.3 147.1,526.5 151.2,524.2 154.2,522.4 158.2,519.5 161.2,517.0 164.2,514.8 166.7,512.6 169.7,510.0 173.2,506.7 176.8,504.4 180.3,502.1 184.3,499.3 188.3,496.4 191.8,493.6 193.8,491.8 196.8,489.1 199.3,486.6 202.3,483.7 205.4,480.6 208.4,477.5 210.4,474.8 213.4,470.8 215.9,467.6 217.4,465.0 219.4,461.9 221.4,458.8 223.4,455.4 225.4,451.9 227.4,448.3 229.4,444.6 231.5,441.4 233.3,438.2 234.5,435.1 236.5,431.6 238.5,427.5 240.5,423.4 242.4,420.1 243.4,418.0 244.9,414.6 246.4,411.8 247.9,408.4 249.4,404.8 251.5,401.0 253.0,397.5 254.5,393.5 256.0,390.0 257.5,386.8 259.0,382.7 260.5,378.9 262.0,375.1 263.5,371.6 264.5,367.6 265.9,363.1 266.9,359.4 268.4,355.2 269.4,351.6 271.0,346.8 272.0,343.6 273.0,340.2 274.3,336.4 275.5,332.2 276.5,328.8 277.5,325.0 279.0,321.0 280.0,318.5 281.7,313.7 283.4,308.9 285.0,306.0 287.5,302.7 290.9,299.0 295.0,295.3 301.7,290.8 308.4,286.6 315.1,282.8 320.1,279.6 326.8,276.1 331.8,273.0 336.8,268.7 341.8,263.9 345.9,259.0 350.9,253.1 356.0,247.6 360.1,243.1 365.1,239.3 370.1,234.3 375.1,229.9 380.2,225.4 385.2,221.7 391.8,217.2 398.5,211.8 403.5,206.9 410.2,202.4 418.5,197.6 425.2,193.6 430.2,189.3 435.2,185.8 441.9,182.7 448.6,180.4 453.6,178.6 460.3,175.5 468.6,170.8 476.9,166.7 483.6,163.6 490.3,160.3 495.3,157.5 500.3,153.0 503.3,150.4 508.3,145.2 513.4,140.0 518.4,136.6 523.4,134.3 529.2,132.1 535.0,129.9 541.7,126.7 547.6,124.9 553.4,124.0 559.2,124.2 565.1,123.3 571.8,120.8 578.4,117.5 585.1,114.5 591.8,111.9 596.8,111.3 601.8,110.3 608.5,108.1 615.1,107.8 621.8,108.2 627.7,109.0 631.8,109.7 636.8,108.9 641.8,110.0 646.9,109.4 651.9,108.9 658.5,106.3 666.9,102.3 671.9,102.0 676.9,103.3 681.9,103.9 686.9,103.7 691.9,101.9 702.3,95.8 708.3,92.5 713.3,91.4 717.8,92.0 720.8,91.9 723.8,93.3 727.9,94.8 731.4,95.7 734.9,96.5 738.4,97.7 742.4,97.7 746.4,98.6 750.4,99.6 754.5,100.7 757.5,102.5" stroke="#00f"/>
<path d="M121.5,521.6 121.5,517.7 121.5,513.9 126.1,513.9 130.1,513.6 135.1,512.7 140.1,511.0 144.6,509.0 149.6,506.2 153.7,503.6 157.7,501.0 160.7,498.7 164.2,495.9 167.2,493.3 170.2,490.4 173.2,487.9 176.8,485.1 180.3,482.1 183.3,479.4 186.3,476.8 189.3,474.3 192.3,471.5 195.3,468.9 197.8,466.4 200.3,463.2 202.8,460.2 205.4,457.1 207.9,453.8 210.4,450.6 212.4,447.5 214.4,444.7 216.4,441.2 218.4,438.3 219.9,435.6 221.9,432.2 224.4,428.8 225.4,425.6 226.9,422.8 228.9,418.8 230.4,414.9 231.9,412.0 233.4,408.7 234.9,405.3 236.4,402.0 237.9,398.6 239.4,394.6 240.9,391.1 242.4,387.7 243.9,384.0 245.4,380.5 246.4,377.2 247.9,373.7 249.4,369.6 250.9,366.1 252.4,362.8 253.4,358.9 254.4,355.0 255.4,350.8 256.4,347.2 257.6,343.7 258.6,340.1 259.9,336.3 260.9,332.3 262.4,328.1 264.2,322.5 265.8,313.9 267.5,305.3 269.2,300.5 270.8,297.2 273.4,289.5 275.9,283.2 277.5,278.8 279.2,274.9 281.7,270.0 285.0,265.1 288.4,261.2 292.5,258.0 300.1,253.8 306.7,250.4 313.4,247.6 324.2,241.4 326.8,239.1 331.8,234.1 335.9,229.0 340.1,223.4 345.1,217.7 350.9,211.5 356.8,205.3 361.8,199.6 368.5,195.0 375.1,189.9 380.2,184.6 385.2,180.2 391.8,175.7 401.8,170.0 410.2,165.0 420.2,158.9 428.5,154.3 435.2,150.9 443.6,145.8 450.2,142.1 456.9,139.3 463.6,137.2 470.3,135.1 476.9,132.1 483.6,128.1 488.6,124.1 493.6,119.1 500.3,112.9 506.7,107.6 515.0,101.3 520.0,98.5 525.0,96.9 530.9,94.9 535.9,95.0 541.7,95.0 546.7,95.4 553.4,94.6 558.4,93.1 563.4,91.5 570.1,88.2 576.8,85.4 581.8,84.6 587.6,81.9 593.5,79.2 598.5,78.5 603.5,79.2 608.5,79.3 613.5,78.6 620.2,77.0 626.8,75.7 631.8,77.1 636.8,78.8 641.0,81.8 645.2,82.9 651.9,81.9 658.5,80.8 665.2,81.2 670.2,82.2 675.2,83.1 681.9,81.6 688.6,80.7 695.2,79.3 703.8,79.1 707.3,80.0 711.3,81.0 715.8,82.1 719.8,83.2 723.3,84.3 726.8,84.7 730.4,85.9 733.4,86.8 736.9,88.3 740.9,88.5 743.9,90.0 747.4,91.1 750.4,92.3 754.5,93.0 758.5,93.9" stroke="#f0f"/>
<path d="M126.6,535.2 125.1,532.7 123.9,530.9 123.0,529.2 122.8,528.3 124.1,529.5 128.6,529.3 132.6,528.4 136.1,527.6 139.1,526.2 142.1,523.9 145.1,521.7 148.6,519.2 152.2,516.5 155.2,514.3 158.2,512.0 161.7,509.7 165.7,506.9 169.2,503.7 172.2,501.3 175.2,499.2 178.8,496.9 182.3,494.5 185.3,492.1 188.3,489.7 191.8,486.5 193.8,484.0 196.8,481.4 199.3,478.7 201.8,475.7 204.4,472.4 206.9,468.8 208.9,466.3 210.9,463.3 212.9,460.2 214.9,457.1 216.9,453.9 218.9,451.1 220.9,447.9 222.9,444.8 224.9,441.8 226.9,438.6 228.9,435.1 231.0,432.2 232.7,429.1 235.0,425.2 236.4,422.0 238.4,418.2 240.4,413.8 242.4,409.7 243.9,406.3 245.4,403.1 246.9,399.1 248.4,396.0 249.9,392.2 251.5,388.5 252.5,385.5 254.0,382.3 255.5,379.0 256.5,375.7 258.0,372.2 259.4,368.6 260.9,364.7 262.2,361.3 263.4,357.5 264.4,353.9 265.9,349.7 267.4,345.2 268.4,342.4 269.4,338.7 270.5,334.6 272.0,330.4 273.3,325.9 274.0,322.0 274.2,319.4 275.9,313.7 277.5,307.9 278.7,299.4 280.0,294.7 281.4,290.0 282.5,285.4 283.9,280.7 285.0,277.1 286.4,272.8 288.4,269.2 290.9,265.3 293.4,261.8 297.5,257.4 302.6,253.2 308.4,248.8 313.4,244.9 317.6,241.8 328.4,235.5 333.4,231.5 338.4,227.0 342.6,222.4 346.8,217.8 350.9,212.6 355.1,207.4 360.1,201.7 364.3,196.6 369.3,192.0 375.1,187.8 380.2,183.4 385.2,178.1 391.8,173.1 400.2,168.3 405.2,166.5 411.0,163.3 420.2,157.3 426.9,152.4 435.2,146.6 445.2,140.5 451.9,137.2 460.3,133.3 466.9,131.4 471.9,130.5 476.9,128.8 482.8,125.3 487.0,121.5 492.8,116.8 498.6,112.6 503.3,108.9 510.0,104.4 516.7,99.0 522.5,94.6 528.4,92.8 533.4,92.5 539.2,92.4 544.2,92.1 550.1,90.7 558.4,87.5 566.8,83.9 573.4,81.7 580.1,80.3 585.1,80.2 590.9,80.2 596.8,80.9 601.8,81.6 608.5,80.7 615.1,78.4 621.8,75.8 627.7,73.8 633.5,73.9 638.5,74.1 641.8,75.3 646.0,76.4 651.0,78.5 656.9,79.1 662.7,78.6 668.5,76.3 673.6,76.7 679.4,77.3 685.2,77.8 691.9,76.3 714.3,72.4 719.3,73.9 723.8,74.5 727.4,75.6 730.9,76.6 734.9,76.7 737.9,79.1 740.9,82.0 743.4,84.8 745.9,86.8 748.4,89.8 751.9,91.5 756.0,92.1" stroke="#0ff"/>
</g>
<g stroke="#ff0" stroke-width="1" fill="none" shape-rendering="crispEdges"><path d="M609.0 87.5H616.5M622.5 87.5H630.0M619.5 77.0V84.5M619.5 90.5V98.0"/><rect x="617.5" y="85.5" width="4" height="4" rx="1.2"/></g>
<g stroke="#0f0" stroke-width="1" fill="none" shape-rendering="crispEdges"><path d="M701.0 71.5H708.5M714.5 71.5H722.0M711.5 70.5V70.5M711.5 74.5V82.0"/><rect x="709.5" y="71.5" width="4" height="2" rx="0"/></g>
<ellipse cx="24.5" cy="384.4" rx="19.4" ry="13.3" fill="#a9a9a9"/><ellipse cx="24.5" cy="384.4" rx="18.2" ry="12.1" fill="#efefef"/><ellipse cx="24.5" cy="384.4" rx="17.3" ry="11.1" fill="#b5b5b5"/><ellipse cx="24.5" cy="384.4" rx="16.6" ry="10.5" fill="#c6c6c6"/>
<ellipse cx="24.5" cy="425.4" rx="19.4" ry="13.3" fill="#a9a9a9"/><ellipse cx="24.5" cy="425.4" rx="18.2" ry="12.1" fill="#efefef"/><ellipse cx="24.5" cy="425.4" rx="17.3" ry="11.1" fill="#b5b5b5"/><ellipse cx="24.5" cy="425.4" rx="16.6" ry="10.5" fill="#c6c6c6"/>
<ellipse cx="24.5" cy="463.7" rx="19.4" ry="13.3" fill="#a9a9a9"/><ellipse cx="24.5" cy="463.7" rx="18.2" ry="12.1" fill="#efefef"/><ellipse cx="24.5" cy="463.7" rx="17.3" ry="11.1" fill="#b5b5b5"/><ellipse cx="24.5" cy="463.7" rx="16.6" ry="10.5" fill="#c6c6c6"/>
<ellipse cx="24.5" cy="505.5" rx="19.4" ry="13.3" fill="#a9a9a9"/><ellipse cx="24.5" cy="505.5" rx="18.2" ry="12.1" fill="#efefef"/><ellipse cx="24.5" cy="505.5" rx="17.3" ry="11.1" fill="#b5b5b5"/><ellipse cx="24.5" cy="505.5" rx="16.6" ry="10.5" fill="#c6c6c6"/>
<ellipse cx="24.5" cy="547.2" rx="19.4" ry="13.3" fill="#a9a9a9"/><ellipse cx="24.5" cy="547.2" rx="18.2" ry="12.1" fill="#efefef"/><ellipse cx="24.5" cy="547.2" rx="17.3" ry="11.1" fill="#b5b5b5"/><ellipse cx="24.5" cy="547.2" rx="16.6" ry="10.5" fill="#c6c6c6"/>
<ellipse cx="24.5" cy="587.8" rx="19.4" ry="13.3" fill="#a9a9a9"/><ellipse cx="24.5" cy="587.8" rx="18.2" ry="12.1" fill="#efefef"/><ellipse cx="24.5" cy="587.8" rx="17.3" ry="11.1" fill="#b5b5b5"/><ellipse cx="24.5" cy="587.8" rx="16.6" ry="10.5" fill="#c6c6c6"/>
</svg></div>
<div id="panelL" class="abs panel"><div class="frame fw"></div><div class="frame fd"></div>
<div class="box y" style="left:15px;top:11px"><i></i><span class="t" style="left:57.60px;top:2.60px;font:21.5px 'Liberation Sans',sans-serif;color:#000;transform:scaleX(1.5147);">433.6</span></div>
<div class="box y" style="left:185px;top:11px"><i></i><span class="t" style="left:102.88px;top:2.60px;font:21.5px 'Liberation Sans',sans-serif;color:#000;transform:scaleX(1.5147);">97</span></div>
<div class="box y" style="left:355px;top:11px"><i></i><span class="t" style="left:66.65px;top:2.60px;font:21.5px 'Liberation Sans',sans-serif;color:#000;transform:scaleX(1.5147);">5652</span></div>
<div class="box g" style="left:15px;top:89px"><i></i><span class="t" style="left:57.60px;top:2.60px;font:21.5px 'Liberation Sans',sans-serif;color:#000;transform:scaleX(1.5147);">438.1</span></div>
<div class="box g" style="left:185px;top:89px"><i></i><span class="t" style="left:102.88px;top:2.60px;font:21.5px 'Liberation Sans',sans-serif;color:#000;transform:scaleX(1.5147);">91</span></div>
<div class="box g" style="left:355px;top:89px"><i></i><span class="t" style="left:66.65px;top:2.60px;font:21.5px 'Liberation Sans',sans-serif;color:#000;transform:scaleX(1.5147);">5332</span></div>
<span class="t" style="left:56.56px;top:55.60px;font:22px 'Liberation Sans',sans-serif;color:#000;transform:scaleX(1.5188);">lbft</span>
<span class="t" style="left:221.46px;top:55.60px;font:22px 'Liberation Sans',sans-serif;color:#000;transform:scaleX(1.4734);">mph</span>
<span class="t" style="left:389.81px;top:55.60px;font:22px 'Liberation Sans',sans-serif;color:#000;transform:scaleX(1.5066);">rpm</span>
<span class="t" style="left:539.25px;top:15.10px;font:22px 'Liberation Sans',sans-serif;color:#00f;transform:scaleX(1.4797);">ratio</span>
<span class="t" style="left:540.71px;top:53.10px;font:22px 'Liberation Sans',sans-serif;color:#00f;transform:scaleX(1.4744);">tcf</span>
<span class="t" style="left:539.82px;top:93.30px;font:22px 'Liberation Sans',sans-serif;color:#00f;transform:scaleX(1.4888);">gain</span>
<div class="box b" style="left:629px;top:11px"><i></i><span class="t" style="left:62.44px;top:2.90px;font:21.5px 'Liberation Sans',sans-serif;color:#ececec;transform:scaleX(1.5147);">4.111</span></div>
<div class="box b" style="left:629px;top:49px"><i></i><span class="t" style="left:75.72px;top:2.90px;font:21.5px 'Liberation Sans',sans-serif;color:#ececec;transform:scaleX(1.5147);">1.00</span></div>
<div class="box b" style="left:629px;top:89px"><i></i><span class="t" style="left:93.83px;top:2.90px;font:21.5px 'Liberation Sans',sans-serif;color:#ececec;transform:scaleX(1.5147);">4.5</span></div>
</div>
<div id="panelR" class="abs panel"><div class="frame fw"></div><div class="frame fd"></div>
<div class="box y" style="left:15px;top:11px"><i></i><span class="t" style="left:57.60px;top:2.60px;font:21.5px 'Liberation Sans',sans-serif;color:#000;transform:scaleX(1.5147);">522.2</span></div>
<div class="box y" style="left:185px;top:11px"><i></i><span class="t" style="left:87.18px;top:2.60px;font:21.5px 'Liberation Sans',sans-serif;color:#000;transform:scaleX(1.5147);">117</span></div>
<div class="box y" style="left:355px;top:11px"><i></i><span class="t" style="left:66.65px;top:2.60px;font:21.5px 'Liberation Sans',sans-serif;color:#000;transform:scaleX(1.5147);">6850</span></div>
<div class="box g" style="left:15px;top:89px"><i></i><span class="t" style="left:57.60px;top:2.60px;font:21.5px 'Liberation Sans',sans-serif;color:#000;transform:scaleX(1.5147);">536.6</span></div>
<div class="box g" style="left:185px;top:89px"><i></i><span class="t" style="left:84.76px;top:2.60px;font:21.5px 'Liberation Sans',sans-serif;color:#000;transform:scaleX(1.5147);">128</span></div>
<div class="box g" style="left:355px;top:89px"><i></i><span class="t" style="left:66.65px;top:2.60px;font:21.5px 'Liberation Sans',sans-serif;color:#000;transform:scaleX(1.5147);">7464</span></div>
<span class="t" style="left:56.16px;top:55.60px;font:22px 'Liberation Sans',sans-serif;color:#000;transform:scaleX(1.5165);">Hp</span>
<span class="t" style="left:225.24px;top:55.60px;font:22px 'Liberation Sans',sans-serif;color:#000;transform:scaleX(1.4884);">mph</span>
<span class="t" style="left:389.06px;top:55.60px;font:22px 'Liberation Sans',sans-serif;color:#000;transform:scaleX(1.5437);">rpm</span>
<span class="t" style="left:539.25px;top:15.10px;font:22px 'Liberation Sans',sans-serif;color:#00f;transform:scaleX(1.4797);">ratio</span>
<span class="t" style="left:540.71px;top:53.10px;font:22px 'Liberation Sans',sans-serif;color:#00f;transform:scaleX(1.4744);">tcf</span>
<span class="t" style="left:539.82px;top:93.30px;font:22px 'Liberation Sans',sans-serif;color:#00f;transform:scaleX(1.4888);">gain</span>
<div class="box b" style="left:629px;top:11px"><i></i><span class="t" style="left:62.44px;top:2.90px;font:21.5px 'Liberation Sans',sans-serif;color:#ececec;transform:scaleX(1.5147);">4.111</span></div>
<div class="box b" style="left:629px;top:49px"><i></i><span class="t" style="left:75.72px;top:2.90px;font:21.5px 'Liberation Sans',sans-serif;color:#ececec;transform:scaleX(1.5147);">1.00</span></div>
<div class="box b" style="left:629px;top:89px"><i></i><span class="t" style="left:93.83px;top:2.90px;font:21.5px 'Liberation Sans',sans-serif;color:#ececec;transform:scaleX(1.5147);">0.0</span></div>
</div>
<div class="abs" style="left:0;top:635px;width:791px;height:1px;background:#dcdcdc"></div><div class="abs" style="left:798px;top:635px;width:793px;height:1px;background:#dcdcdc"></div>
<div id="footline" class="abs"></div>
<div id="footer" class="abs"><svg id="abbey" width="250" height="82" viewBox="0 775 250 82" font-family="'Liberation Sans',sans-serif" font-weight="bold"><title>Abbey Motorsport</title>
<path d="M230.3,824.8 230.7,817.2 230.3,809.6 207.3,813.2 207.2,817.2 207.3,821.2ZM228.0,803.3 223.2,796.6 217.7,790.2 200.2,801.8 202.8,805.3 205.6,808.7ZM211.4,785.6 202.7,781.6 193.6,778.1 186.4,794.5 191.0,796.6 195.7,798.5ZM185.1,776.4 174.8,776.1 164.5,776.4 169.4,793.3 174.8,793.4 180.2,793.3ZM156.0,778.1 146.9,781.6 138.2,785.6 153.9,798.5 158.6,796.6 163.2,794.5ZM131.9,790.2 126.4,796.6 121.6,803.3 144.0,808.7 146.8,805.3 149.4,801.8ZM121.6,831.1 126.4,837.8 131.9,844.2 149.4,832.6 146.8,829.1 144.0,825.7ZM138.2,848.8 146.9,852.8 156.0,856.3 163.2,839.9 158.6,837.8 153.9,835.9ZM164.5,858.0 174.8,858.3 185.1,858.0 180.2,841.1 174.8,841.0 169.4,841.1ZM193.6,856.3 202.7,852.8 211.4,848.8 195.7,835.9 191.0,837.8 186.4,839.9ZM217.7,844.2 223.2,837.8 228.0,831.1 205.6,825.7 202.8,829.1 200.2,832.6Z" fill="#ff8010"/>
<g stroke="#1a1a1a" stroke-width=".7">
<text transform="translate(44.42,807.40) scale(1.3520,1)" font-size="17.4" font-weight="bold" fill="#1a1a1a">BBEY</text>
<text transform="translate(43.18,822.50) scale(1.4304,1)" font-size="17.4" font-weight="bold" fill="#1a1a1a">OTORSPORT</text>
</g>
<g fill="#ff8010" stroke="#ff8010" stroke-width="1.1">
<text transform="matrix(1.9257 0 -0.9391 1 19.04 807.6)" font-size="17.8">A</text>
<text transform="matrix(2.1774 0 -1.2500 1 -2.10 822.7)" font-size="17.8">M</text>
</g>
</svg>
<div id="contact">
<span class="t" style="left:287.03px;top:5.10px;font:15.3px 'DejaVu Sans','Liberation Sans',sans-serif;color:#000;transform:scaleX(1.5027);">www.abbeymotorsport.co.uk</span>
<span class="t" style="left:310.27px;top:41.60px;font:14.4px 'DejaVu Sans','Liberation Sans',sans-serif;color:#000;transform:scaleX(1.6595);">Tel : +44 (0)1883 732331</span>
<span class="t" style="left:299.24px;top:59.60px;font:14.4px 'DejaVu Sans','Liberation Sans',sans-serif;color:#000;transform:scaleX(1.6759);">Fax : +44 (0)1883 718296</span>
</div>
<div id="runinfo">
<span class="t" style="left:634.57px;top:10.00px;font:normal bold 13.4px 'Liberation Sans',sans-serif;color:#000;transform:scaleX(1.5959);">Folder</span>
<div class="fld" style="top:7px"><i></i><span class="t" style="left:-0.20px;top:2.80px;font:13.8px 'Liberation Sans',sans-serif;color:#000;transform:scaleX(1.6796);">M40BHP(BCNR33)</span></div>
<span class="t" style="left:636.78px;top:36.70px;font:normal bold 13.4px 'Liberation Sans',sans-serif;color:#000;transform:scaleX(1.5774);">Run ID</span>
<div class="fld" style="top:33px"><i></i><span class="t" style="left:0.09px;top:3.50px;font:13.8px 'Liberation Sans',sans-serif;color:#000;transform:scaleX(1.7686);">rs_f</span></div>
<span class="t" style="left:656.46px;top:62.00px;font:normal bold 13.4px 'Liberation Sans',sans-serif;color:#000;transform:scaleX(1.6002);">Date</span>
<div class="fld" style="top:59px"><i></i><span class="t" style="left:2.64px;top:2.80px;font:13.8px 'Liberation Sans',sans-serif;color:#000;transform:scaleX(1.6760);">13-Aug-2008  09:51:11</span></div>
</div>
<svg id="dynapack" style="left:990px" width="606" height="82" viewBox="990 775 606 82" font-family="'Liberation Sans',sans-serif" font-weight="bold"><title>Dynapack Chassis Dynamometers</title>
<text transform="matrix(3.1019 0 0.0000 1 1018.46 826.4)" font-size="36.5" font-style="italic" fill="#1560bd" stroke="#1560bd" stroke-width="6" vector-effect="non-scaling-stroke" stroke-linejoin="miter" stroke-miterlimit="2.2">Dyna</text>
<text transform="matrix(3.1351 0 0.0000 1 1287.52 826.4)" font-size="36.5" font-style="italic" fill="#c8001e" stroke="#c8001e" stroke-width="6" vector-effect="non-scaling-stroke" stroke-linejoin="miter" stroke-miterlimit="2.2">pack</text>
<path d="M1010 791 L1060 791 L1048 800 L1024 800 L1018 797Z" fill="#c8001e"/>
<text transform="matrix(3.1019 0 0.0000 1 1012.46 819.4)" font-size="36.5" font-style="italic" fill="#c8001e" stroke="#c8001e" stroke-width="6" vector-effect="non-scaling-stroke" stroke-linejoin="miter" stroke-miterlimit="2.2">Dyna</text>
<text transform="matrix(3.1351 0 0.0000 1 1281.52 819.4)" font-size="36.5" font-style="italic" fill="#1560bd" stroke="#1560bd" stroke-width="6" vector-effect="non-scaling-stroke" stroke-linejoin="miter" stroke-miterlimit="2.2">pack</text>
<text transform="translate(1147.76,847.9) scale(1.95,1)" font-size="11.8" letter-spacing="1.279" fill="#1560bd" stroke="#1560bd" stroke-width=".5">CHASSIS</text>
<text transform="translate(1322.56,847.9) scale(1.95,1)" font-size="11.8" letter-spacing="1.175" fill="#1560bd" stroke="#1560bd" stroke-width=".5">DYNAMOMETERS</text>
</svg></div>
</body></html>
